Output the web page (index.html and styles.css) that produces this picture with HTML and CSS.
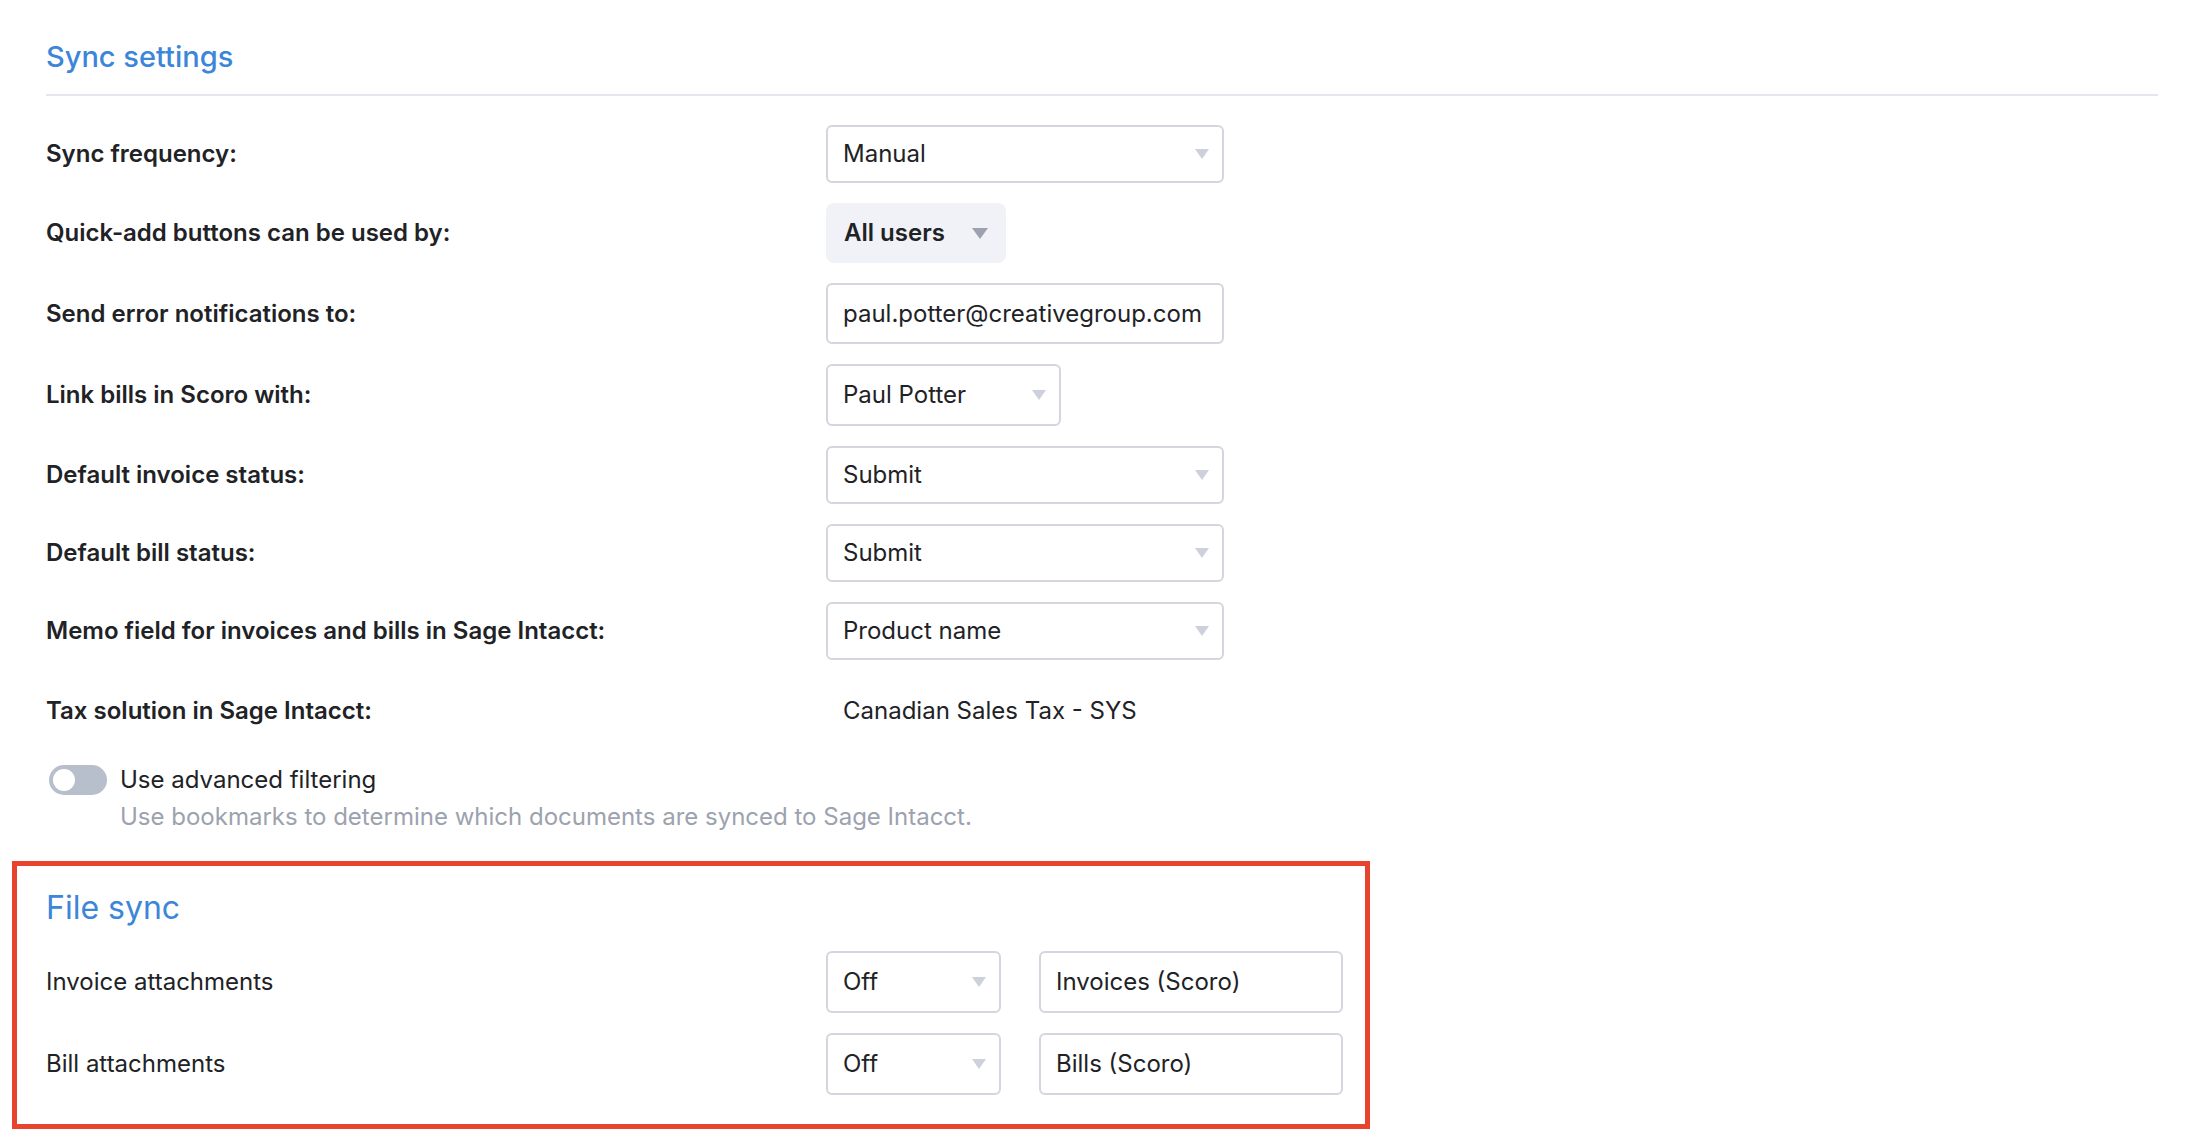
FILE: index.html
```html
<!DOCTYPE html>
<html lang="en">
<head>
<meta charset="utf-8">
<title>Sync settings</title>
<link rel="stylesheet" href="styles.css">
</head>
<body>
<div class="page">
  <h2 class="section-title">Sync settings</h2>

  <div class="rows">
    <div class="row">
      <div class="label">Sync frequency:</div>
      <div class="select select-wide h58"><span>Manual</span><span class="caret"></span></div>
    </div>
    <div class="row">
      <div class="label">Quick-add buttons can be used by:</div>
      <div class="pill"><span>All users</span><span class="caret caret-dark"></span></div>
    </div>
    <div class="row">
      <div class="label">Send error notifications to:</div>
      <div class="input input-wide h61">paul.potter@creativegroup.com</div>
    </div>
    <div class="row">
      <div class="label">Link bills in Scoro with:</div>
      <div class="select select-user h62"><span>Paul Potter</span><span class="caret"></span></div>
    </div>
    <div class="row">
      <div class="label">Default invoice status:</div>
      <div class="select select-wide h58"><span>Submit</span><span class="caret"></span></div>
    </div>
    <div class="row">
      <div class="label">Default bill status:</div>
      <div class="select select-wide h58"><span>Submit</span><span class="caret"></span></div>
    </div>
    <div class="row">
      <div class="label">Memo field for invoices and bills in Sage Intacct:</div>
      <div class="select select-wide h58"><span>Product name</span><span class="caret"></span></div>
    </div>
    <div class="row row-text">
      <div class="label">Tax solution in Sage Intacct:</div>
      <div class="value">Canadian Sales Tax - SYS</div>
    </div>
  </div>

  <div class="toggle-row">
    <div class="toggle"><span class="knob"></span></div>
    <div class="toggle-text">
      <div class="toggle-title">Use advanced filtering</div>
      <div class="toggle-desc">Use bookmarks to determine which documents are synced to Sage Intacct.</div>
    </div>
  </div>

  <section class="file-sync">
    <h2 class="file-title">File sync</h2>
    <div class="rows rows-file">
      <div class="row">
        <div class="label label-plain">Invoice attachments</div>
        <div class="controls">
          <div class="select select-small h62"><span>Off</span><span class="caret"></span></div>
          <div class="input input-folder h62">Invoices (Scoro)</div>
        </div>
      </div>
      <div class="row">
        <div class="label label-plain">Bill attachments</div>
        <div class="controls">
          <div class="select select-small h62"><span>Off</span><span class="caret"></span></div>
          <div class="input input-folder h62">Bills (Scoro)</div>
        </div>
      </div>
    </div>
  </section>
</div>
</body>
</html>
```

FILE: styles.css
```css
* { box-sizing: border-box; }

html, body {
  margin: 0;
  padding: 0;
  background: #ffffff;
}

body {
  font-family: "Inter", "Noto Sans", "DejaVu Sans", sans-serif;
  color: #212226;
  font-size: 24px;
}

.page {
  padding: 40px 40px 0 46px;
}

.section-title {
  margin: 0;
  font-size: 29px;
  line-height: 34px;
  font-weight: 500;
  color: #3b86d9;
  padding-bottom: 20px;
  border-bottom: 2px solid #e4e7ed;
}

.rows {
  display: flex;
  flex-direction: column;
  gap: 20px;
  margin-top: 29px;
}

.row {
  display: flex;
  align-items: center;
}

.row-text {
  height: 62px;
}

.label {
  width: 780px;
  flex: none;
  font-weight: 600;
  line-height: 30px;
}

.label-plain {
  font-weight: 400;
}

.value {
  padding-left: 17px;
  line-height: 30px;
}

.select,
.input {
  display: flex;
  align-items: center;
  border: 2px solid #d3d6df;
  border-radius: 6px;
  background: #fff;
  line-height: 30px;
  padding: 0 13px 0 15px;
}

.select {
  justify-content: space-between;
}

.h58 { height: 58px; }
.h61 { height: 61px; }
.h62 { height: 62px; }

.select-wide { width: 398px; }
.input-wide { width: 398px; }
.select-user { width: 235px; }
.select-small { width: 175px; }
.input-folder { width: 304px; }

.caret {
  width: 0;
  height: 0;
  border-left: 7px solid transparent;
  border-right: 7px solid transparent;
  border-top: 10px solid #cdd1db;
  flex: none;
}

.caret-dark {
  border-left-width: 8px;
  border-right-width: 8px;
  border-top: 11px solid #9da2ae;
}

.pill {
  display: flex;
  align-items: center;
  justify-content: space-between;
  width: 180px;
  height: 60px;
  padding: 0 18px;
  background: #f0f2f7;
  border-radius: 8px;
  font-weight: 600;
  line-height: 30px;
}

.toggle-row {
  display: flex;
  align-items: flex-start;
  margin-top: 23px;
  padding-left: 3px;
}

.toggle {
  width: 58px;
  height: 30px;
  border-radius: 15px;
  background: #b8bfcc;
  flex: none;
  display: flex;
  align-items: center;
  padding-left: 4px;
}

.knob {
  width: 22px;
  height: 22px;
  border-radius: 50%;
  background: #ffffff;
}

.toggle-text {
  margin-left: 13px;
}

.toggle-title {
  line-height: 30px;
}

.toggle-desc {
  margin-top: 7px;
  line-height: 30px;
  color: #9ca2ae;
}

.file-sync {
  margin-top: 29px;
  margin-left: -34px;
  width: 1358px;
  border: 5px solid #e8442d;
  padding: 22px 20px 29px 29px;
}

.file-title {
  margin: 0;
  font-size: 32px;
  line-height: 40px;
  font-weight: 400;
  color: #3b86d9;
}

.rows-file {
  margin-top: 23px;
}

.controls {
  display: flex;
  gap: 38px;
}
```
